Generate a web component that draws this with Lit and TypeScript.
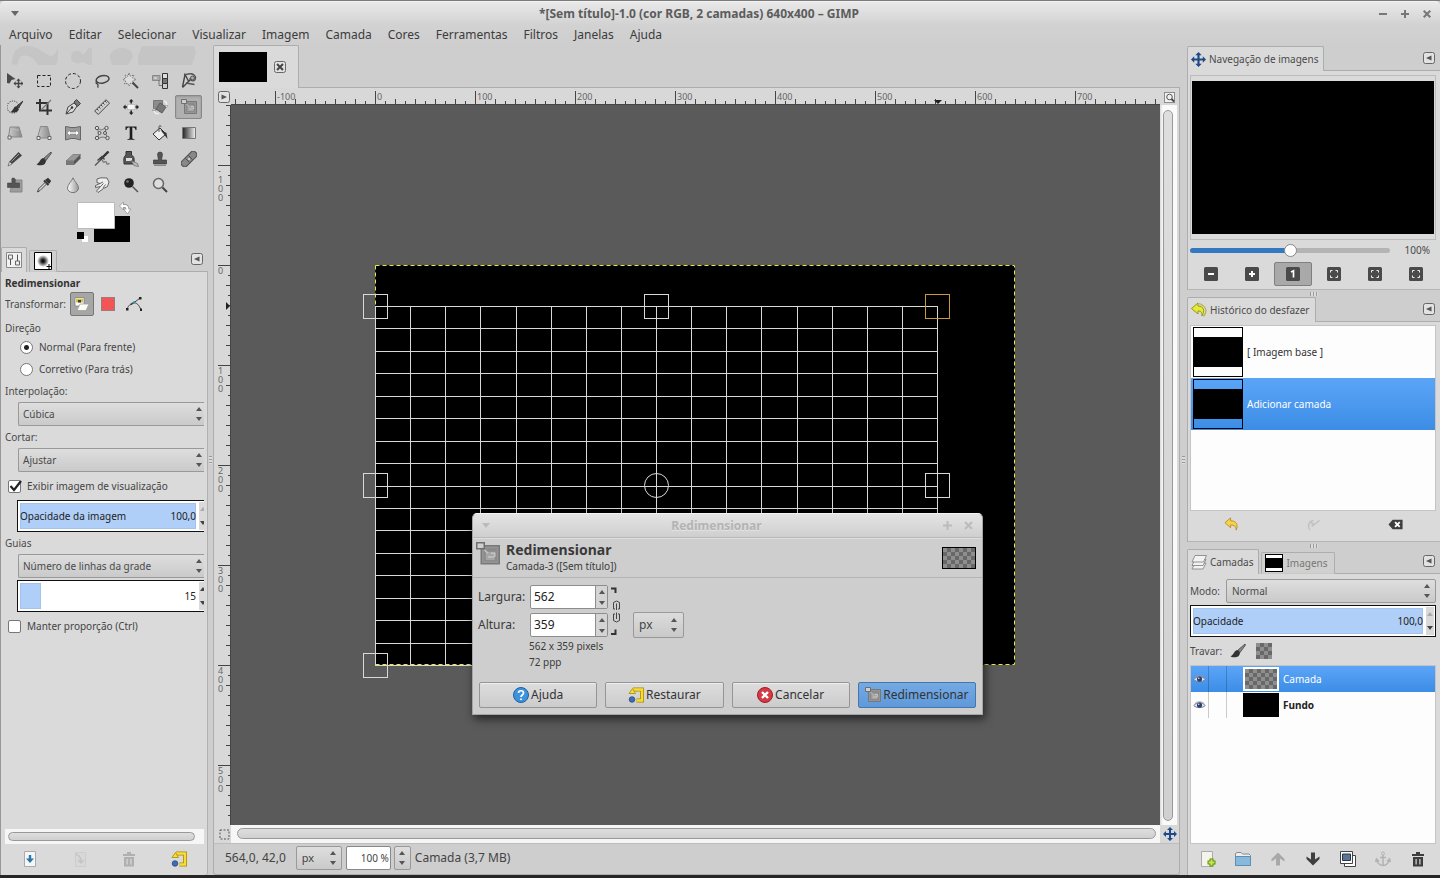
import { LitElement, html, svg, css, nothing } from "lit";
import type { TemplateResult } from "lit";
import { customElement, state } from "lit/decorators.js";
import { classMap } from "lit/directives/class-map.js";
import { styleMap } from "lit/directives/style-map.js";

type Glyph = TemplateResult;

const icon = (body: Glyph, size = 16, box = 16) =>
  html`<svg class="icon" width=${size} height=${size} viewBox="0 0 ${box} ${box}" fill="none" aria-hidden="true">${body}</svg>`;

const cross = (x: number, y: number, r: number, color: string) => svg`
  <path fill=${color} transform="translate(${x} ${y}) scale(${r / 7})"
    d="M0-7 3-4H1V-1H4V-3L7 0 4 3V1H1V4H3L0 7-3 4H-1V1H-4V3L-7 0-4-3V-1H-1V-4H-3Z"/>`;

const scaleGlyph = svg`
  <path d="M3.500 2.500H15.500V14.500H3.500Z" fill="#959595" stroke="#787878"/>
  <path d="M5 4H14V13H5Z" fill="#8b8b8b"/>
  <path d="M6.500 6.500H12.500V12H6.500Z" fill="#a5a5a5"/>
  <path d="M5.500 5 8 7.500M8 10H12M10 7.500H12.500V10" stroke="#c4c4c4"/>
  <path d="M.5.500H5.500V4.500H.5Z" fill="#cfcfcf" stroke="#6e6e6e"/>`;

const brushGlyph = svg`
  <path d="M15 1 8 7l2 2.5L15.5 2Z" fill="#888" stroke="#333" stroke-width=".7"/>
  <path d="M7.5 7C4 7.500 4.500 11 .5 13.500 5 15.500 10 14 10 9.500Z" fill="#333"/>`;

const stampGlyph = svg`
  <path d="M8 1a2.500 2.500 0 0 1 2.500 2.500L9.500 9H14.500V13H1.500V9H6.500L5.500 3.500A2.500 2.500 0 0 1 8 1Z" fill="#555" stroke="#333" stroke-width=".6"/>
  <path d="M2 14.500H14" stroke="#888"/>`;

const resetGlyph = svg`
  <path d="M5 2.500H14V13.500H8.500" stroke="#a88b00" stroke-width="4"/>
  <path d="M5 2.500H14V13.500H8.500" stroke="#f6dc3a" stroke-width="2.400"/>
  <path d="M1 6.500 4.500 1.500 7.500 6.500Z" fill="#f6dc3a" stroke="#a88b00" stroke-width=".8"/>
  <circle cx="4" cy="12.500" r="2.800" fill="#3c6fb5" stroke="#1f3d72" stroke-width=".7"/>`;

const tools: { name: string; glyph: Glyph }[] = [
  { name: "Mover", glyph: svg`<path d="M0 0 8.500 6 4.500 7 2.500 10.500 0 10Z" fill="#4a4a4a"/>${cross(11.500, 10.500, 5, "#444")}` },
  { name: "Seleção retangular", glyph: svg`<path d="M1.500 2.500H14.500V13.500H1.500Z" stroke="#222" stroke-dasharray="3 2"/>` },
  { name: "Seleção elíptica", glyph: svg`<circle cx="8" cy="8" r="7.500" stroke="#222" stroke-dasharray="3 2"/>` },
  { name: "Seleção livre", glyph: svg`<ellipse cx="8.500" cy="6.500" rx="6.500" ry="3.700" transform="rotate(-12 8 6)" stroke="#444" stroke-width="1.500"/><path d="M2.500 8.500C1 11 4 10 4 12S3 13.500 4.500 14.500" stroke="#444" stroke-width="1.300"/>` },
  { name: "Seleção contígua", glyph: svg`<path d="M6 0 7.200 3.200 11 2 9.500 5 13 6.500 9.500 8 11 11 7.500 10 6 13 4.500 10 1.500 11 2.700 8 0 6.500 3 5 2 2 5 3.200Z" fill="#ddd" stroke="#666" stroke-width=".9" stroke-dasharray="1.500 1"/><path d="M9.500 9.500 15 15" stroke="#444" stroke-width="2"/>` },
  { name: "Seleção por cor", glyph: svg`<path d="M.5 2.500H8V7.500H.5Z" fill="#aaa" stroke="#888"/><path d="M2 5H5" stroke="#eee"/><path d="M7 7V12.500H11" stroke="#777"/><path d="M10.500.500H15.500V5.500H10.500Z" fill="#ddd" stroke="#333"/><path d="M10.500 5.500H15.500V10.500H10.500Z" fill="#777" stroke="#333"/><path d="M10.500 10.500H15.500V15.500H10.500Z" fill="#ccc" stroke="#333"/>` },
  { name: "Tesoura", glyph: svg`<path d="M1.500 14 4 1.500 8 9M1.500 14.500 10 6" stroke="#444" stroke-width="1.400"/><path d="M3 2C7 1 12-1 14.500 4 15 9 9 9 9 5" stroke="#555" stroke-width="1.400"/><path d="M5 10 13.500 11.500" stroke="#555" stroke-width="1.300"/><circle cx="11.500" cy="5" r="2" fill="#aaa" stroke="#555"/>` },
  { name: "Seleção do primeiro plano", glyph: svg`<circle cx="6" cy="8" r="6" stroke="#222" stroke-dasharray="1 1.400"/><path d="M16 2 10 7 11.500 9Z" fill="#555" stroke="#333"/><path d="M9.500 7C6 8 7 11 3.500 13 8 14.500 12 13 11.500 9Z" fill="#333"/>` },
  { name: "Cortar", glyph: svg`<path d="M4 0V11.500H16M0 4H11.500V16" stroke="#333" stroke-width="2"/><path d="M5 11 15 1" stroke="#777" stroke-width="1.200"/>` },
  { name: "Vetores", glyph: svg`<path d="M1 15 3 8 9 4 12 7 8 13Z" fill="#ddd" stroke="#444"/><path d="M9 3 11.500.5 15.500 4.500 12.500 7.500Z" fill="#777" stroke="#444"/><path d="M1.500 14.500 7 8.500" stroke="#444"/><circle cx="7" cy="8.500" r="1.200" fill="#333"/>` },
  { name: "Medidas", glyph: svg`<path d="M.7 12 12 .7 15.500 4.200 4.200 15.500Z" fill="#ccc" stroke="#444"/><path d="M3 10l1.500 1.500M5 8l1.500 1.500M7 6l1.500 1.500M9 4l1.500 1.500M11 2l1.500 1.500" stroke="#444"/>` },
  { name: "Alinhar", glyph: svg`<path d="M4.500 5.500H12V10.500H4.500Z" fill="#f4f4f4" stroke="#aaa" stroke-width=".6"/><path d="M8.200 0 10.500 2.500H9V4.500H7.400V2.500H6ZM8.200 16 10.500 13.500H9V11.500H7.400V13.500H6ZM0 8 2.500 5.500V7.200H4V8.800H2.500V10.500ZM16 8 13.500 5.500V7.200H12.500V8.800H13.500V10.500Z" fill="#222"/>` },
  { name: "Rotacionar", glyph: svg`<path d="M1.500 1.500H10.500V10.500H1.500Z" fill="#8c8c8c" stroke="#777"/><path d="M8 4 14 8 10 14 4 10Z" fill="#777" stroke="#5c5c5c"/><path d="M12 2C15 3 15 5 14.500 7M2 11C2 14 4 15 7 14.500" stroke="#eee" stroke-width="1.500"/><path d="M12.500 6.500H16L14.500 8.500Z M0 11.500H4L2 9.500Z" fill="#eee" stroke="#777" stroke-width=".5"/>` },
  { name: "Redimensionar", glyph: scaleGlyph },
  { name: "Inclinar", glyph: svg`<path d="M3 2 12 2 15 12 1.500 12Z" fill="url(#toolShade)" stroke="#888"/><path d="M1 11H4V14H1Z" fill="#eee" stroke="#666"/><path d="M3 4C6 3 9 6 12 5" stroke="#bbb"/>` },
  { name: "Perspectiva", glyph: svg`<path d="M4.500 1.500H11.500L14.500 13H1.500Z" fill="url(#toolShade)" stroke="#888"/><path d="M1 11.500H4V14.500H1ZM12 11.500H15V14.500H12Z" fill="#eee" stroke="#666"/>` },
  { name: "Espelhar", glyph: svg`<path d="M.5 1.500 6 2.500H10L15.500 1.500V15L10 13.500H6L.5 15Z" fill="#999" stroke="#666"/><path d="M2 8 5 5V7H11V5L14 8 11 11V9H5V11Z" fill="#fff" stroke="#777" stroke-width=".5"/>` },
  { name: "Gaiola", glyph: svg`<path d="M3 3 7 5 12 3 11 8 14 13 8 12 3 14 5 9Z" fill="#ccc" stroke="#777"/><g fill="#ddd" stroke="#555"><circle cx="3" cy="3" r="1.700"/><circle cx="12.500" cy="3" r="1.700"/><circle cx="3" cy="13" r="1.700"/><circle cx="13.500" cy="13" r="1.700"/><circle cx="5.500" cy="8" r="1.500"/><circle cx="11" cy="8" r="1.500"/></g>` },
  { name: "Texto", glyph: svg`<path d="M2.500 1.500H13.500V5H12.500C12.200 3 11.500 2.500 9.300 2.500V12.500C9.300 13.700 9.800 14 11.500 14V14.800H4.500V14C6.200 14 6.700 13.700 6.700 12.500V2.500C4.500 2.500 3.800 3 3.500 5H2.500Z" fill="#1d1d1d"/>` },
  { name: "Preenchimento", glyph: svg`<path d="M1 9 8 3 14 9 7 15Z" fill="#eee" stroke="#333"/><path d="M7 7V2C7 0 9 0 9 2" stroke="#555"/><path d="M8 4.500 14.500 8 15.500 14 12.500 10Z" fill="#333"/>` },
  { name: "Mistura", glyph: svg`<path d="M1.500 2.500H14.500V13.500H1.500Z" fill="url(#toolBlend)" stroke="#777"/>` },
  { name: "Lápis", glyph: svg`<path d="M11.500 1 15 4.500 5 13 2.500 10.500Z" fill="#444"/><path d="M2.500 10.500 1 15 5 13Z" fill="#ddd" stroke="#444" stroke-width=".6"/><path d="M12 3 4.500 10.500" stroke="#999"/>` },
  { name: "Pincel", glyph: brushGlyph },
  { name: "Borracha", glyph: svg`<path d="M1 10 8 3.500H15.500L9 10Z" fill="#999" stroke="#666" stroke-width=".6"/><path d="M1 10H9V14H1Z" fill="#777"/><path d="M9 10 15.500 3.500V7.500L9 14Z" fill="#555"/>` },
  { name: "Aerógrafo", glyph: svg`<path d="M14.500.500 6 9" stroke="#333" stroke-width="2.400"/><path d="M7 8.500 1 14.500" stroke="#555" stroke-width="1.200"/><path d="M3.500 9.500 8 5.500 10.500 8.500" stroke="#444" stroke-width="1.300"/><path d="M8.500 9C9 14 12 8.500 12.500 11.500S14 12.500 15.500 12.500" stroke="#777" stroke-width="1.300"/>` },
  { name: "Tinta", glyph: svg`<path d="M3 .5H8.500V4C12 6 11 9 11 13H1C1 9 0 6 3 4Z" fill="#555" stroke="#333"/><path d="M3 7H9V10H3Z" fill="#ddd"/><path d="M8 9.500 14.500 12.500 15.500 15.500 11 14.500Z" fill="#bbb" stroke="#666" stroke-width=".7"/>` },
  { name: "Clonagem", glyph: stampGlyph },
  { name: "Restauração", glyph: svg`<rect x="-1.500" y="4.500" width="19" height="7" rx="3.500" transform="rotate(-45 8 8)" fill="#888" stroke="#4c4c4c"/><path d="M4.500 7.500 8.500 11.500M7.500 4.500 11.500 8.500" stroke="#4c4c4c"/><path d="M7 8H9M8 7V9" stroke="#ddd"/>` },
  { name: "Clonagem em perspectiva", glyph: svg`<path d="M6 3H15V15H3Z" fill="#9c9c9c" stroke="#888"/><path d="M6 1C9 1 8.500 3.500 8 6H12.500V10.500H.5V6H5C5 3.500 4 1 6 1Z" fill="#555" stroke="#444" stroke-width=".6"/>` },
  { name: "Seletor de cores", glyph: svg`<path d="M9 3 12 .8 15.200 4 13 7Z" fill="#333"/><path d="M8 3.500 12.500 8" stroke="#333" stroke-width="2"/><path d="M9 5.500 10.500 7 4 13.500 1.500 15 2.500 12Z" fill="#ddd" stroke="#444"/>` },
  { name: "Desfocar", glyph: svg`<path d="M8 .8C9 4 13.500 7.500 13.500 11A5.500 4.600 0 0 1 2.500 11C2.500 7.500 7 4 8 .8Z" fill="url(#toolDrop)" stroke="#777"/>` },
  { name: "Borrar", glyph: svg`<path d="M3 2 7 .8 13 1 15 5 13.500 9.500 9.500 11.500 4 15.500 2.500 14 6.500 9.500 1.500 10.500 1.500 8.500 6 6.500 3 5.500Z" fill="#eee" stroke="#555" stroke-width=".9"/><path d="M6.500 9.500 9.500 6.500M9 11 11.500 7.500M6 6.500 9 5" stroke="#666"/>` },
  { name: "Subexposição", glyph: svg`<circle cx="6" cy="6" r="4.800" fill="#222"/><circle cx="4.500" cy="4.500" r="1.300" fill="#777"/><path d="M9.500 9.500 15 15" stroke="#555" stroke-width="1.500"/>` },
  { name: "Zoom", glyph: svg`<circle cx="6.500" cy="6.500" r="5" fill="#ddd" stroke="#666" stroke-width="1.500"/><path d="M10.500 10.500 15 15" stroke="#444" stroke-width="2"/>` },
];

const SELECTED_TOOL = "Redimensionar";

const menus = ["Arquivo", "Editar", "Selecionar", "Visualizar", "Imagem", "Camada", "Cores", "Ferramentas", "Filtros", "Janelas", "Ajuda"];

const darkTile = (body: Glyph) => svg`<rect x="1" y="1" width="14" height="14" rx="1.500" fill="#4a4a4a"/>${body}`;
const fitMarks = svg`<path d="M4.500 6.500V4.500H6.500M9.500 4.500H11.500V6.500M11.500 9.500V11.500H9.500M6.500 11.500H4.500V9.500" stroke="#eee"/>`;

const viewButtons: { name: string; glyph: Glyph; on?: boolean }[] = [
  { name: "Afastar", glyph: darkTile(svg`<path d="M5 8H11" stroke="#fff" stroke-width="2"/>`) },
  { name: "Aproximar", glyph: darkTile(svg`<path d="M5 8H11M8 5V11" stroke="#fff" stroke-width="2"/>`) },
  { name: "Zoom 1:1", glyph: darkTile(svg`<path d="M6 6 8.500 4.800V11.500" stroke="#fff" stroke-width="1.700"/>`), on: true },
  { name: "Ajustar imagem na janela", glyph: darkTile(fitMarks) },
  { name: "Preencher janela", glyph: darkTile(fitMarks) },
  { name: "Encolher janela", glyph: darkTile(fitMarks) },
];

const undoGlyph = (fill: string, edge: string) => svg`<path d="M1 6 7 1V4C13 4 15.500 8 13 14 13 10 11 8.500 7 8.500V11.500Z" fill=${fill} stroke=${edge} stroke-width=".9"/>`;

const trashGlyph = (color: string) => svg`<path d="M2 3H14V5H2ZM6 1H10V3H6ZM3 6H13V15.500H3ZM5.500 8V13.500H6.700V8ZM9.300 8V13.500H10.500V8Z" fill=${color} fill-rule="evenodd"/>`;

const undoButtons = [
  { name: "Desfazer", glyph: undoGlyph("#f7d24b", "#b98a1a") },
  { name: "Refazer", glyph: svg`<path d="M4 14C1 8 4 4 8 4M6 10 14.500 3.500M5 6 9 8" stroke="#c0c0c0" stroke-width="1.500"/>` },
  { name: "Limpar histórico", glyph: svg`<path d="M.5 8 5 3H15.500V13H5Z" fill="#3d3d3d"/><path d="M7.500 5.500 12.500 10.500M12.500 5.500 7.500 10.500" stroke="#fff" stroke-width="2"/>` },
];

const layerButtons = [
  { name: "Nova camada", glyph: svg`<path d="M1.500.500H12.500V15.500H1.500Z" fill="#f4f4ec" stroke="#aaa"/><path d="M7.500 11.500H15.500M11.500 7.500V15.500" stroke="#5f8f00" stroke-width="4"/><path d="M8.500 11.500H14.500M11.500 8.500V14.500" stroke="#c6e85a" stroke-width="2"/>` },
  { name: "Novo grupo", glyph: svg`<path d="M.5 14.500V2.500L2 1.500H6L7.500 3H14L15.500 4.500V14.500Z" fill="#eee" stroke="#888"/><path d="M.5 5.500H15.500V14.500H.5Z" fill="#86b9dc" stroke="#5d8fb5"/>` },
  { name: "Levantar camada", glyph: svg`<path d="M8 1.500 14.500 8V10.500L10 7.500V14.500H6V7.500L1.500 10.500V8Z" fill="#a8a8a8"/>` },
  { name: "Abaixar camada", glyph: svg`<path d="M8 14.500 14.500 8V5.500L10 8.500V1.500H6V8.500L1.500 5.500V8Z" fill="#3f3f3f"/>` },
  { name: "Duplicar camada", glyph: svg`<path d="M4.500 4.500H15.500V15.500H4.500Z" fill="#fff" stroke="#444"/><path d="M.5.500H12.500V12.500H.5Z" fill="#fff" stroke="#444"/><path d="M2.500 3H10.500V9.500H2.500Z" fill="#5c7590" stroke="#26384f"/>` },
  { name: "Ancorar camada", glyph: svg`<path d="M8 4V14M5 6.500H11M1.500 8.500C2 12 5 14.500 8 14.500S14 12 14.500 8.500M.5 11 1.500 8 4 10.500M12 10.500 14.500 8 15.500 11" stroke="#b2b2b2" stroke-width="1.500"/><circle cx="8" cy="2.500" r="1.500" stroke="#b2b2b2"/>` },
  { name: "Apagar camada", glyph: trashGlyph("#3d3d3d") },
];

const optionButtons = [
  { name: "Salvar opções", glyph: svg`<path d="M2.500.500H13.500V15.500H2.500Z" fill="#f6f6f6" stroke="#aaa"/><path d="M6.800 4H9.200V7.500H12L8 12 4 7.500H6.800Z" fill="#2b77a8"/>` },
  { name: "Restaurar opções", glyph: svg`<path d="M3.500 1.500H13.500V15.500H3.500Z" fill="#d8d8d8" stroke="#cdcdcd"/><path d="M3 3C8 4 9 7 9 11M6 9 9 12 12 9" stroke="#c4c4c4" stroke-width="1.400"/>` },
  { name: "Apagar opções", glyph: trashGlyph("#b0b0b0") },
  { name: "Reiniciar opções", glyph: resetGlyph },
];

const eyeGlyph = svg`
  <path d="M1 8C4 3.500 12 3.500 15 8 12 11.500 4 11.500 1 8Z" fill="#e8ecf2" stroke="#77778a" stroke-width="1.200"/>
  <path d="M2 6C5 2.500 11 2.500 14 6" stroke="#999"/>
  <circle cx="8" cy="7.500" r="3.200" fill="#2b3f74"/><circle cx="7" cy="6.500" r="1" fill="#dfe8ff"/>`;

const chain = svg`
  <path d="M1 1.500H5.500V6" stroke="#333" stroke-width="2"/>
  <path d="M1 47H5.500V42.500" stroke="#333" stroke-width="2"/>
  <path d="M5 22H3.500V15.500Q6.500 12.500 9.500 15.500V22H8M6.500 16.500V23" stroke="#444"/>
  <path d="M5 27H3.500V33.500Q6.500 36.500 9.500 33.500V27H8M6.500 25.500V32" stroke="#444"/>`;

const menuArrow = (label: string, flip = false) => html`
  <button class="corner" aria-label=${label}>
    <svg class="icon" width="12" height="12" viewBox="0 0 12 12" fill="none" aria-hidden="true">
      <rect x=".5" y=".5" width="11" height="11" rx="2" fill="#e2e2e2" stroke="#666"/>
      <path d=${flip ? "M3.500 3.500 9 6 3.500 8.500Z" : "M8.500 3.500 3 6 8.500 8.500Z"} fill="#555"/>
    </svg>
  </button>`;

const arrows = html`
  <svg class="arrows" width="6" height="14" viewBox="0 0 6 14" aria-hidden="true">
    <path d="M0 4 3 0 6 4ZM0 10H6L3 14Z" fill="#555"/>
  </svg>`;

const combo = (id: string, value: string, label: string | null, cls = "") => html`
  <div class="combo ${cls}">
    <select id=${id} aria-label=${label ?? nothing}><option>${value}</option></select>
    ${arrows}
  </div>`;

const steppers = (name: string, topped = false) => html`
  <div class="steps">
    <button class=${classMap({ step: true, dim: topped })} aria-label="Aumentar ${name}">
      <svg width="6" height="4" viewBox="0 0 6 4" aria-hidden="true"><path d="M0 4 3 0 6 4Z" fill="currentColor"/></svg>
    </button>
    <button class="step" aria-label="Diminuir ${name}">
      <svg width="6" height="4" viewBox="0 0 6 4" aria-hidden="true"><path d="M0 0H6L3 4Z" fill="currentColor"/></svg>
    </button>
  </div>`;

const scaleField = (id: string, label: string, value: string, fill: number, hideLabel = false) => html`
  <div class="scale">
    <div class="bar">
      <div class="fill" style=${styleMap({ width: `${fill}%` })}></div>
      <div class="bartext">
        ${hideLabel ? html`<span></span>` : html`<label for=${id}>${label}</label>`}
        <input id=${id} class="barvalue" aria-label=${hideLabel ? label : nothing} .value=${value} />
      </div>
    </div>
    ${steppers(label, fill === 100)}
  </div>`;

const checker = (id: string, w: number, h: number, size: number) => html`
  <svg class="icon" width=${w} height=${h} aria-hidden="true">
    <defs><pattern id=${id} width=${size * 2} height=${size * 2} patternUnits="userSpaceOnUse">
      <rect width=${size * 2} height=${size * 2} fill="#686868"/>
      <path d="M0 0H${size}V${size}H0ZM${size} ${size}H${size * 2}V${size * 2}H${size}Z" fill="#8e8e8e"/>
    </pattern></defs>
    <rect width=${w} height=${h} fill="url(#${id})"/>
  </svg>`;

const range = (from: number, to: number, step: number) =>
  Array.from({ length: Math.floor((to - from) / step) + 1 }, (_, i) => from + i * step);

const tickLength = (v: number) => (v % 100 === 0 ? 13 : v % 20 === 0 ? 5 : 3);

const ORIGIN = { x: 144, y: 160 };
const BOX = { x: 144, y: 201, w: 562, h: 359 };
/* Space that the docks, bars and borders take from the window around the canvas. */
const AROUND = { x: 511, y: 158 };

@customElement("resize-dialog")
export class ResizeDialog extends LitElement {
  static styles = css`
    :host {
      display: flex;
      flex-direction: column;
      width: 511px;
      box-sizing: border-box;
      border: 1px solid #a5a5a5;
      border-top-color: #f4f4f4;
      border-radius: 5px 5px 0 0;
      background: #cecece;
      box-shadow: 2px 4px 10px rgba(0, 0, 0, .6);
      color: #3a3a3a;
      font: 12px/16px "Noto Sans", sans-serif;
    }
    .icon { display: block; flex: none; }
    .titlebar { display: flex; align-items: center; height: 23px; padding: 0 9px; gap: 12px; color: #b3b3b3; background: linear-gradient(#e4e4e4, #cfcfcf); border-radius: 5px 5px 0 0; border-bottom: 1px solid #b9b9b9; }
    .titlebar h2 { flex: 1; margin: 0; text-align: center; font-size: 12px; line-height: 16px; text-shadow: 0 1px #e6e6e6; }
    .chrome { display: flex; padding: 0; border: 0; background: none; }
    .head { display: flex; align-items: center; gap: 6px; height: 38px; padding: 0 6px 0 3px; border-top: 1px solid #dedede; border-bottom: 1px solid #b4b4b4; }
    .head > .icon { align-self: flex-start; margin-top: 3px; }
    .names { flex: 1; }
    .names b { display: block; font-size: 13px; line-height: 16px; }
    .names b { font-size: 14px; }
    .names span { display: block; font-size: 10px; line-height: 16px; }
    .thumb { border: 1px solid #000; }
    .form { display: grid; grid-template-columns: 50px 78px 14px 60px; grid-template-rows: 24px 24px; column-gap: 2px; row-gap: 4px; padding: 7px 6px 0 5px; align-items: center; }
    .form > label, .spin { grid-row: 1; }
    .form > label { grid-column: 1; }
    .spin { grid-column: 2; display: flex; height: 24px; box-sizing: border-box; border: 1px solid #8d8d8d; border-radius: 2px; background: #fff; }
    .form > .second { grid-row: 2; }
    .spin input { flex: 1; min-width: 0; border: 0; padding: 0 3px; background: none; font: inherit; color: #222; outline: none; }
    .steps { display: flex; flex-direction: column; width: 11px; background: #d4d4d4; border-left: 1px solid #8d8d8d; }
    .step { flex: 1; display: flex; align-items: center; justify-content: center; border: 0; padding: 0; background: none; color: #555; }
    .link { grid-column: 3; grid-row: 1 / 3; display: flex; border: 0; background: none; padding: 0; }
    .combo { grid-column: 4; grid-row: 2; display: grid; align-items: center; margin-left: 7px; width: 51px; }
    .combo select { grid-area: 1 / 1; appearance: none; height: 26px; border: 1px solid #999; border-radius: 2px; padding: 0 5px; background: linear-gradient(#dcdcdc, #c9c9c9); font: inherit; color: #444; }
    .arrows { grid-area: 1 / 1; justify-self: end; margin-right: 7px; pointer-events: none; }
    .info { padding: 1px 0 0 56px; font-size: 10px; line-height: 16px; }
    .actions { display: grid; grid-template-columns: repeat(4, 1fr); gap: 8px; padding: 12px 6px 6px; }
    .action { display: flex; align-items: center; justify-content: center; gap: 2px; height: 26px; padding: 0; border: 1px solid #959595; border-radius: 2px; background: linear-gradient(#dddddd, #cccccc); box-shadow: inset 0 1px #eee; color: #333; font: inherit; }
    .action.primary { background: linear-gradient(#74aae4, #5f99da); border-color: #4677ab; box-shadow: none; }
  `;

  render() {
    return html`
      <div class="titlebar">
        <button class="chrome" aria-label="Recolher"><svg width="8" height="5"><path d="M0 0H8L4 5Z" fill="#bbb"/></svg></button>
        <h2>Redimensionar</h2>
        <button class="chrome" aria-label="Maximizar"><svg width="9" height="9"><path d="M4.500 0V9M0 4.500H9" stroke="#bbb" stroke-width="2"/></svg></button>
        <button class="chrome" aria-label="Fechar"><svg width="9" height="9"><path d="M1 1 8 8M8 1 1 8" stroke="#bbb" stroke-width="2"/></svg></button>
      </div>
      <div class="head">
        ${icon(scaleGlyph, 24)}
        <div class="names"><b>Redimensionar</b><span>Camada-3 ([Sem título])</span></div>
        <div class="thumb">${checker("dialogThumb", 32, 20, 4)}</div>
      </div>
      <div class="form">
        <label for="w">Largura:</label>
        <div class="spin"><input id="w" .value=${"562"} />${steppers("largura")}</div>
        <label class="second" for="h">Altura:</label>
        <div class="spin second"><input id="h" .value=${"359"} />${steppers("altura")}</div>
        <button class="link" aria-label="Manter proporção"><svg width="12" height="49" fill="none">${chain}</svg></button>
        ${combo("unit", "px", "Unidade")}
      </div>
      <div class="info">562 x 359 pixels<br />72 ppp</div>
      <div class="actions">
        <button class="action">${icon(svg`<circle cx="8" cy="8" r="7.500" fill="#3c93dd" stroke="#1f5f9f"/><path d="M5.500 6C5.500 3 10.500 3 10.500 6 10.500 8 8 8 8 10M8 11.500V13" stroke="#fff" stroke-width="1.700"/>`)}Ajuda</button>
        <button class="action">${icon(resetGlyph)}Restaurar</button>
        <button class="action">${icon(svg`<circle cx="8" cy="8" r="7.500" fill="#d33a44" stroke="#9c1d28"/><path d="M5 5 11 11M11 5 5 11" stroke="#fff" stroke-width="2.400"/>`)}Cancelar</button>
        <button class="action primary">${icon(scaleGlyph)}Redimensionar</button>
      </div>`;
  }
}

@customElement("app-root")
export class AppRoot extends LitElement {
  @state() private tool = SELECTED_TOOL;
  @state() private room = { x: 0, y: 0 };

  private measure = () => {
    this.room = { x: window.innerWidth - AROUND.x, y: window.innerHeight - AROUND.y };
  };

  connectedCallback() {
    super.connectedCallback();
    this.measure();
    window.addEventListener("resize", this.measure);
  }

  disconnectedCallback() {
    window.removeEventListener("resize", this.measure);
    super.disconnectedCallback();
  }

  static styles = css`
    :host {
      display: flex;
      flex-direction: column;
      height: 100vh;
      box-sizing: border-box;
      border-top: 1px solid #7b7b7b;
      border-bottom: 3px solid #262626;
      background: #cecece;
      color: #4a4a4a;
      font: 10px/16px "Noto Sans", sans-serif;
      overflow: hidden;
    }
    * { box-sizing: border-box; }
    button { display: flex; align-items: center; justify-content: center; padding: 0; border: 1px solid transparent; background: none; color: inherit; font: inherit; }
    input, select { font: inherit; color: inherit; }
    h1, h2, ul { margin: 0; padding: 0; font-size: inherit; list-style: none; }
    .icon { display: block; flex: none; }

    .titlebar { display: flex; align-items: center; gap: 12px; height: 24px; flex: none; padding: 0 8px 0 10px; background: linear-gradient(#e9e9e9, #d2d2d2); border-top: 1px solid #f3f3f3; border-radius: 5px 5px 0 0; }
    .titlebar h1 { flex: 1; text-align: center; font-size: 12px; line-height: 16px; color: #5c5c5c; }
    .menubar { display: flex; gap: 16px; height: 20px; flex: none; padding: 0 9px; background: linear-gradient(#d2d2d2, #cecece); }
    .menubar button { border: 0; font-size: 12px; line-height: 18px; color: #3c3c3c; }
    .work { flex: 1; min-height: 0; display: grid; grid-template-columns: 208px 5px 1fr 7px 253px; }

    .left { display: flex; flex-direction: column; min-height: 0; box-shadow: inset 1px 0 #979797; }
    .mascot { display: block; height: 23px; }
    .tools { display: grid; grid-template-columns: repeat(7, 29px); grid-auto-rows: 26px; }
    .tool { margin: 1px; border-radius: 2px; }
    .tool.on { background: #b0b0b0; border-color: #888; box-shadow: inset 0 1px 2px #999; }
    .colors { display: flex; justify-content: center; height: 49px; padding: 4px 0 0; }
    .tabs { display: flex; align-items: flex-end; flex: none; height: 25px; }
    .tabs .rest { flex: 1; align-self: stretch; display: flex; justify-content: flex-end; align-items: center; padding-right: 4px; border-bottom: 1px solid #adadad; }
    .tab { display: flex; align-items: center; gap: 3px; height: 25px; padding: 0 5px 0 3px; border: 1px solid #adadad; border-bottom-color: #c9c9c9; border-radius: 2px 2px 0 0; background: #d0d0d0; color: #777; }
    .tab.on { background: #dadada; border-bottom: 0; color: #4a4a4a; }
    .tab.late { height: 22px; margin-left: 2px; padding-right: 6px; }
    .left .tabs { padding-left: 1px; }
    .left .tabs .tab { padding: 0 4px; }
    .options { flex: 1; min-height: 0; display: flex; flex-direction: column; padding-left: 4px; background: #dadada; border: solid #979797; border-width: 0 0 0 1px; box-shadow: inset -1px 0 #b0b0b0; border-radius: 0 0 3px 0; }
    .form { flex: 1; display: flex; flex-direction: column; overflow: hidden; margin-right: 4px; }
    .optitle { height: 20px; padding-top: 3px; font-weight: bold; color: #333; }
    .mode { display: flex; align-items: center; height: 24px; gap: 2px; }
    .mode span { margin-right: 2px; }
    .mode button { width: 24px; height: 24px; border-radius: 2px; }
    .mode button.on { background: #a6a6a6; border-color: #777; }
    .sub { height: 22px; line-height: 22px; }
    .sub.first { height: 20px; line-height: 24px; }
    .tick { display: flex; align-items: center; gap: 6px; height: 22px; color: #444; }
    .tick.deep { padding-left: 15px; }
    .tick.tall { height: 28px; padding-left: 3px; }
    .tick input { appearance: none; width: 13px; height: 13px; margin: 0; border: 1px solid #777; background: #fff; border-radius: 2px; }
    .tick input[type="radio"] { border-radius: 50%; }
    .tick input[type="radio"]:checked { background: radial-gradient(circle, #222 0 2px, #fff 3px); }
    .checkbox { display: grid; }
    .checkbox > * { grid-area: 1 / 1; }
    .checkbox svg { overflow: visible; pointer-events: none; display: none; }
    .checkbox input:checked + svg { display: block; }

    .combo { display: grid; align-items: center; }
    .combo select { grid-area: 1 / 1; appearance: none; width: 100%; height: 24px; padding: 0 5px; border: 1px solid #999; border-radius: 2px; background: linear-gradient(#dedede, #cacaca); }
    .combo .arrows { grid-area: 1 / 1; justify-self: end; margin-right: 6px; pointer-events: none; }
    .combo.cut { padding-left: 13px; }
    .combo.cut select { border-right: 0; border-radius: 2px 0 0 2px; padding: 0 4px; }
    .combo.cut .arrows { margin-right: 2px; }
    .cutbox { margin: 0 -5px 0 12px; }
    .cutbox.below { margin-top: 2px; }
    .scale { display: flex; height: 32px; border: 1px solid #111; background: #fff; color: #222; }
    .bar { display: grid; flex: 1; margin: 2px; }
    .bar > * { grid-area: 1 / 1; }
    .fill { background: #b0cff8; border: 1px solid #a3c2ec; }
    .bartext { display: flex; align-items: center; justify-content: space-between; }
    .bartext label { white-space: nowrap; }
    .barvalue { width: 40px; padding: 0; border: 0; background: none; text-align: right; outline: none; }
    .steps { display: flex; flex-direction: column; width: 8px; margin: 1px; background: #dadada; color: #444; }
    .step { flex: 1; border: 0; }
    .step.dim { color: #aaa; }

    .pill { border: 1px solid #999; border-radius: 6px; background: linear-gradient(#dedede, #d0d0d0); }
    .optscroll { padding: 3px; margin: 0 4px 0 0; background: #f6f6f6; }
    .optscroll .pill { height: 9px; margin: 0 6px 0 0; }
    .strip { display: grid; grid-auto-flow: column; grid-auto-columns: 1fr; align-items: center; height: 31px; padding-bottom: 1px; flex: none; }
    .strip.opts { margin-right: 4px; }
    .strip.undos { height: 30px; padding-bottom: 3px; }

    .gutter { display: flex; flex-direction: column; align-items: center; justify-content: center; }
    .gripv { width: 3px; height: 8px; background: repeating-linear-gradient(#999 0 1px, #ddd 1px 3px); }
    .griph { display: flex; align-items: center; justify-content: center; height: 7px; flex: none; }
    .griph i { width: 8px; height: 4px; background: repeating-linear-gradient(90deg, #999 0 1px, #ddd 1px 3px); }

    .center { display: flex; flex-direction: column; min-width: 0; min-height: 0; }
    .doctabs { display: flex; height: 43px; flex: none; }
    .doctab { display: flex; align-items: center; gap: 6px; width: 86px; padding: 0 5px; background: #dadada; border: 1px solid #adadad; border-bottom: 0; border-radius: 2px 2px 0 0; }
    .docthumb { width: 48px; height: 30px; background: #000; }
    .doctabs .rest { flex: 1; border-bottom: 1px solid #adadad; }
    .view { flex: 1; min-height: 0; display: grid; grid-template-columns: 14px 1fr 19px; grid-template-rows: 16px 1fr 18px; padding: 1px 0 0 3px; border: solid #adadad; border-width: 0 1px; background: #d8d8d8; }
    .view > svg { display: block; width: 100%; height: 100%; }
    .rulertext { font: 9px/9px "Noto Sans", sans-serif; fill: #666; }
    .canvas { position: relative; background: #5a5a5a; overflow: hidden; }
    .canvas > svg { display: block; width: 100%; height: 100%; }
    resize-dialog { position: absolute; left: 241px; top: 408px; }
    .fixed { display: flex; align-items: center; justify-content: center; }
    .vtrack { display: flex; padding: 5px 4px 4px 3px; margin-right: 2px; background: linear-gradient(90deg, #dadada, #fafafa 3px); }
    .vtrack .pill { flex: 1; }
    .htrack { display: flex; padding: 3px 4px 4px 6px; background: #f6f6f6; }
    .htrack .pill { flex: 1; }
    .status { display: flex; align-items: center; height: 32px; flex: none; padding: 0 11px 2px; border: 1px solid #adadad; border-top-color: #bdbdbd; border-radius: 0 0 3px 3px; font-size: 12px; color: #444; }
    .status .combo { width: 46px; margin: 0 4px 0 10px; }
    .status .combo select { font-size: 11px; }
    .status .zoom { width: 45px; height: 24px; padding: 0 1px; border: 1px solid #888; border-radius: 2px; background: #fff; font-size: 10px; text-align: right; outline: none; }
    .pop { width: 17px; height: 24px; margin: 0 4px 0 3px; border: 1px solid #999; border-radius: 2px; background: linear-gradient(#dedede, #cacaca); }

    .right { display: flex; flex-direction: column; min-height: 0; padding-top: 1px; }
    .panel { display: flex; flex-direction: column; padding: 0 4px 0 2px; background: #dadada; border-left: 1px solid #adadad; border-bottom: 1px solid #b5b5b5; }
    .panel.grow { flex: 1; min-height: 0; border-bottom: 0; }
    .frame { margin: 4px 0 0; padding: 5px 1px; border: 1px solid #bbb; }
    .preview { height: 153px; background: #000; }
    .zoomrow { display: grid; grid-template-columns: 200px 1fr; align-items: center; height: 22px; padding-bottom: 2px; }
    .zoomrow output { text-align: right; padding-right: 6px; }
    .zoomrow input { appearance: none; width: 100%; height: 14px; margin: 0; background: none; }
    .zoomrow input::-webkit-slider-runnable-track { height: 5px; border-radius: 3px; background: linear-gradient(90deg, #3378c0 50%, #b4b4b4 50%); }
    .zoomrow input::-webkit-slider-thumb { appearance: none; width: 13px; height: 13px; margin-top: -4px; border: 1px solid #888; border-radius: 50%; background: #fff; }
    .views { height: 27px; padding: 0 0 3px; }
    .views button { width: 38px; height: 24px; margin: 0 auto; border-radius: 2px; }
    .views button.on { background: #a9a9a9; border-color: #808080; }
    .list { margin-top: 3px; background: #fdfdfd; border: 1px solid #c4c4c4; }
    .list.undo { height: 186px; }
    .list.layers { flex: 1; margin: 0; min-height: 0; }
    .undoitem { display: flex; align-items: center; gap: 4px; height: 52px; padding-left: 2px; color: #333; }
    .on.undoitem, .on.layer { background: linear-gradient(#5ba5f8, #3c8de6); color: #fff; }
    .undothumb { width: 50px; height: 50px; padding: 9px 0; border: 1px solid #000; }
    .undothumb::before { content: ""; display: block; height: 100%; background: #000; }
    .tinythumb { width: 18px; height: 18px; padding: 3px 0; border: 1px solid #000; background: #fff; }
    .tinythumb::before { content: ""; display: block; height: 100%; background: #000; }
    .moderow { display: flex; align-items: center; gap: 6px; margin: 5px 0 2px; }
    .moderow .combo { flex: 1; }
    .lockrow { display: flex; align-items: center; gap: 7px; height: 28px; }
    .lockrow button { width: 18px; border: 0; margin-right: 1px; }
    .layer { display: grid; grid-template-columns: 18px 18px 16px 36px 1fr; align-items: center; height: 26px; }
    .layer button { align-self: stretch; border: 0; border-right: 1px solid rgba(0, 0, 0, .2); }
    .layer b, .layer span { padding-left: 4px; }
    .layer b { color: #222; }
    .lthumb { width: 36px; height: 24px; background: #000; }
    .lthumb.active { border: 2px solid #fff; background: none; }
  `;

  private hRuler() {
    const last = this.room.x - ORIGIN.x;
    return svg`<svg aria-hidden="true">
      ${range(-140, last, 10).map((v) => {
        const x = ORIGIN.x + v;
        return svg`<path d="M${x + 0.5} ${15 - tickLength(v)}V15" stroke="#444"/>
          ${v % 100 === 0 && v + 20 < last ? svg`<text class="rulertext" x=${x + 2} y="11">${v}</text>` : nothing}`;
      })}
      <path d="M0 15.500H3000" stroke="#444"/>
      <path d="M703 11H711L707 15Z" fill="#222"/>
    </svg>`;
  }

  private vRuler() {
    const last = this.room.y - ORIGIN.y;
    return svg`<svg aria-hidden="true">
      ${range(-160, last, 10).map((v) => {
        const y = ORIGIN.y + v;
        return svg`<path d="M${14 - tickLength(v)} ${y + 0.5}H14" stroke="#444"/>
          ${v % 100 === 0 && v + 30 < last
            ? svg`<text class="rulertext" y=${y}>${[...String(v)].map((c) => svg`<tspan x="1" dy="9">${c}</tspan>`)}</text>`
            : nothing}`;
      })}
      <path d="M13.500 0V3000" stroke="#444"/>
      <path d="M9 197V205L13 201Z" fill="#222"/>
    </svg>`;
  }

  private drawing() {
    const line = (n: number, total: number) => Math.round((n * total) / 16);
    const handle = (x: number, y: number, color = "#d8d8d8") =>
      svg`<rect x=${Math.floor(x) - 11.5} y=${y - 11.5} width="24" height="24" stroke=${color}/>`;
    const midX = BOX.x + BOX.w / 2;
    const midY = BOX.y + 179;
    const endX = BOX.x + BOX.w;
    const endY = BOX.y + BOX.h;
    const n = range(0, 16, 1);
    return svg`<svg fill="none" role="img" aria-label="Imagem 640x400">
      <rect x="144" y="160" width="640" height="400" fill="#000"/>
      <rect x="144.500" y="160.500" width="639" height="399" stroke="#111"/>
      <rect x="144.500" y="160.500" width="639" height="399" stroke="#e6ea3c" stroke-dasharray="4 3"/>
      <g stroke="#d8d8d8">
        ${n.map((i) => svg`<path d="M${BOX.x + line(i, BOX.w) + 0.5} ${BOX.y}V${endY}"/>`)}
        ${n.map((i) => svg`<path d="M${BOX.x} ${BOX.y + line(i, BOX.h) + 0.5}H${endX}"/>`)}
        <circle cx=${midX + 0.5} cy=${midY + 0.5} r="12"/>
      </g>
      ${handle(BOX.x, BOX.y)}${handle(midX, BOX.y)}${handle(endX, BOX.y, "#c89a3c")}
      ${handle(BOX.x, midY)}${handle(endX, midY)}
      ${handle(BOX.x, endY)}${handle(midX, endY)}${handle(endX, endY)}
    </svg>`;
  }

  private toolbox() {
    return html`
      <svg class="mascot" width="207" height="23" fill="#c5c5c5" aria-hidden="true">
        <path d="M12 19C12 6 18 1 27 1 36 1 42 6 48 10 53 13 56 8 58 3V14L56 20H38C34 12 26 8 20 12L17 20Z"/>
        <path d="M71 13C71 4 80 4 83 10L89 3H92V20H88L83 17C78 20 72 18 71 13Z"/>
        <path d="M110 14C108 1 132-2 133 12L128 20H112Z"/>
        <path d="M138 20V11L142 1H194L196 8 192 20Z"/>
      </svg>
      <div class="tools">
        ${tools.map(
          (t) => html`<button class=${classMap({ tool: true, on: t.name === this.tool })} aria-label=${t.name} @click=${() => (this.tool = t.name)}>
            ${icon(svg`<defs>
              <linearGradient id="toolShade"><stop stop-color="#ccc"/><stop offset="1" stop-color="#888"/></linearGradient>
              <linearGradient id="toolBlend"><stop stop-color="#222"/><stop offset="1" stop-color="#f2f2f2"/></linearGradient>
              <linearGradient id="toolDrop"><stop stop-color="#fff"/><stop offset="1" stop-color="#999"/></linearGradient>
            </defs>${t.glyph}`)}
          </button>`
        )}
      </div>
      <div class="colors">
        <svg width="54" height="44" fill="none" role="img" aria-label="Cores de frente e de fundo">
          <path d="M17 14H53V40H17Z" fill="#000"/>
          <path d="M.5.500H37.500V26.500H.5Z" fill="#fff" stroke="#bbb"/>
          <path d="M4.500 33.500H11.500V40.500H4.500Z" fill="#fff" stroke="#bbb" stroke-width=".6"/><path d="M0 30H7V37H0Z" fill="#000"/>
          <path d="M45 4H48Q50.500 4 50.500 8" stroke="#888" stroke-width="3.500"/><path d="M42.500 4 46.500 0V8ZM46.500 7H54L50.500 12Z" fill="#fff" stroke="#888" stroke-width=".7"/><path d="M45 4H48Q50.500 4 50.500 8" stroke="#fff" stroke-width="2.200"/>
        </svg>
      </div>`;
  }

  private options() {
    return html`
      <div class="tabs">
        <button class="tab on" aria-label="Opções de ferramentas">${icon(svg`
          <path d="M.5.500H15.500V15.500H.5Z" fill="#f2f2f2" stroke="#888"/>
          <path d="M4.500 6.500V13M11.500 2.500V9" stroke="#555"/><path d="M2.500 3H6.500V7H2.500ZM9.500 9H13.500V13H9.500Z" fill="#eee" stroke="#666"/>`)}</button>
        <button class="tab late" aria-label="Pincéis">${icon(svg`
          <defs><radialGradient id="soft"><stop offset=".2" stop-color="#111"/><stop offset="1" stop-color="#fff"/></radialGradient></defs>
          <path d="M.5.500H17.500V17.500H.5Z" fill="#fff" stroke="#000"/><circle cx="9" cy="9" r="6" fill="url(#soft)"/><path d="M12.500 14.500H17.500M15 12V17" stroke="#000"/>`, 18, 18)}</button>
        <div class="rest">${menuArrow("Configurar esta aba")}</div>
      </div>
      <div class="options">
        <div class="form">
          <div class="optitle">Redimensionar</div>
          <div class="mode">
            <span>Transformar:</span>
            <button class="on" aria-label="Camada">${icon(svg`<path d="M1 1.500H10V10H1Z" fill="#fff" stroke="#777" stroke-width=".7"/><path d="M2 2.500H9V6.500H2Z" fill="#d6c348"/><path d="M4 4H7V6.500H4Z" fill="#44403a"/><path d="M6 8H15L12 14.500H3Z" fill="#fbfbf2" stroke="#999" stroke-width=".7"/>`)}</button>
            <button aria-label="Seleção">${icon(svg`<path d="M1.500 1.500H14.500V14.500H1.500Z" fill="#f25555" stroke="#d8d8d8"/><path d="M1.500 1.500H14.500V14.500H1.500Z" stroke="#5a2020" stroke-dasharray="1 1"/>`)}</button>
            <button aria-label="Vetor">${icon(svg`<path d="M1 13C4 6 11 3 15 14M5 9 14 2M4 9 7 7" stroke="#444"/><path d="M0 12H2.500V14.500H0ZM13 1H15.500V3.500H13ZM14 12.500H16V15H14Z" fill="#222"/><circle cx="8" cy="6.500" r="1.300" fill="#2f8fb0"/>`)}</button>
          </div>
          <div class="sub first">Direção</div>
          <label class="tick deep"><input type="radio" name="dir" checked />Normal (Para frente)</label>
          <label class="tick deep"><input type="radio" name="dir" />Corretivo (Para trás)</label>
          <label class="sub" for="interp">Interpolação:</label>
          ${combo("interp", "Cúbica", null, "cut")}
          <label class="sub" for="clip">Cortar:</label>
          ${combo("clip", "Ajustar", null, "cut")}
          <label class="tick tall"><span class="checkbox"><input type="checkbox" checked />
            <svg width="13" height="13" fill="none" aria-hidden="true"><path d="M2.500 6 6 10 13 1" stroke="#222" stroke-width="2.200"/></svg></span>Exibir imagem de visualização</label>
          <div class="cutbox">${scaleField("op", "Opacidade da imagem", "100,0", 100)}</div>
          <label class="sub" for="guides">Guias</label>
          ${combo("guides", "Número de linhas da grade", null, "cut")}
          <div class="cutbox below">${scaleField("lines", "Linhas", "15", 12, true)}</div>
          <label class="tick tall"><span class="checkbox"><input type="checkbox" /></span>Manter proporção (Ctrl)</label>
        </div>
        <div class="optscroll"><div class="pill"></div></div>
        <div class="strip opts">${optionButtons.map((b) => html`<button aria-label=${b.name}>${icon(b.glyph)}</button>`)}</div>
      </div>`;
  }

  private document() {
    return html`
      <div class="doctabs">
        <div class="doctab">
          <div class="docthumb"></div>
          <button aria-label="Fechar imagem">${icon(svg`<rect x=".5" y=".5" width="11" height="11" rx="2" fill="#e2e2e2" stroke="#666"/><path d="M3 3 9 9M9 3 3 9" stroke="#444" stroke-width="2"/>`, 12, 12)}</button>
        </div>
        <div class="rest"></div>
      </div>
      <div class="view">
        <div class="fixed">${menuArrow("Menu da imagem", true)}</div>
        ${this.hRuler()}
        <div class="fixed">${icon(svg`<path d="M.5.500H10.500V10.500H.5Z" fill="#f2f2f2" stroke="#333" stroke-dasharray="1 1"/><circle cx="5.500" cy="5" r="2.800" stroke="#555"/><path d="M7.500 7 10 9.500" stroke="#444" stroke-width="1.800"/>`, 11, 11)}</div>
        ${this.vRuler()}
        <div class="canvas">${this.drawing()}<resize-dialog></resize-dialog></div>
        <div class="vtrack"><div class="pill"></div></div>
        <div class="fixed">${icon(svg`<rect x="1" y="1" width="9" height="9" stroke="#555" stroke-dasharray="2 1.500"/>`, 11, 11)}</div>
        <div class="htrack"><div class="pill"></div></div>
        <div class="fixed">${icon(cross(7, 7, 7, "#204a87"), 14, 14)}</div>
      </div>
      <div class="status">
        <span>564,0, 42,0</span>
        ${combo("units", "px", "Unidade")}
        <input class="zoom" aria-label="Zoom" .value=${"100 %"} />
        <button class="pop" aria-label="Níveis de zoom">${arrows}</button>
        <span>Camada (3,7 MB)</span>
      </div>`;
  }

  private docks() {
    return html`
      <div class="tabs">
        <button class="tab on">${icon(cross(7, 7, 7, "#204a87"), 15, 14)}Navegação de imagens</button>
        <div class="rest">${menuArrow("Configurar navegação")}</div>
      </div>
      <div class="panel">
        <div class="frame"><div class="preview"></div></div>
        <div class="zoomrow"><input type="range" aria-label="Zoom" value="50" /><output>100%</output></div>
        <div class="strip views">
          ${viewButtons.map((b) => html`<button class=${classMap({ on: !!b.on })} aria-label=${b.name}>${icon(b.glyph)}</button>`)}
        </div>
      </div>
      <div class="griph"><i></i></div>
      <div class="tabs">
        <button class="tab on">${icon(svg`<path d="M.5 6.500 7 1V4C13 4 14 9 11 14 11 10 10 9 7 9V12Z" fill="#e4ea35" stroke="#8b9010" stroke-width=".9"/><path d="M8 1.500C15 4 17 9 12.500 14.500" stroke="#b7b93a" stroke-width="1.300"/>`)}Histórico do desfazer</button>
        <div class="rest">${menuArrow("Configurar histórico")}</div>
      </div>
      <div class="panel">
        <ul class="list undo">
          <li class="undoitem"><div class="undothumb"></div><span>[ Imagem base ]</span></li>
          <li class="undoitem on"><div class="undothumb"></div><span>Adicionar camada</span></li>
        </ul>
        <div class="strip undos">${undoButtons.map((b) => html`<button aria-label=${b.name}>${icon(b.glyph, 15)}</button>`)}</div>
      </div>
      <div class="griph"><i></i></div>
      <div class="tabs">
        <button class="tab on">${icon(svg`<g fill="#f2f2f2" stroke="#888" stroke-width=".9"><path d="M4 9H15L12 15H1Z"/><path d="M4 5.500H15L12 11.500H1Z"/><path d="M4 1.500H15.500L12.500 8H1Z"/></g>`)}Camadas</button>
        <button class="tab late"><span class="tinythumb"></span>Imagens</button>
        <div class="rest">${menuArrow("Configurar camadas")}</div>
      </div>
      <div class="panel grow">
        <div class="moderow"><label for="blend">Modo:</label>${combo("blend", "Normal", null)}</div>
        ${scaleField("layerop", "Opacidade", "100,0", 100)}
        <div class="lockrow"><span>Travar:</span>
          <button aria-label="Travar pixels">${icon(brushGlyph)}</button>
          <button aria-label="Travar canal alfa">${checker("lockAlpha", 16, 16, 4)}</button>
        </div>
        <ul class="list layers">
          <li class="layer on"><button aria-label="Visível">${icon(eyeGlyph, 13)}</button><button aria-label="Vincular"></button><i></i>
            <div class="lthumb active">${checker("layerThumb", 32, 20, 4)}</div><span>Camada</span></li>
          <li class="layer"><button aria-label="Visível">${icon(eyeGlyph, 13)}</button><button aria-label="Vincular"></button><i></i>
            <div class="lthumb"></div><b>Fundo</b></li>
        </ul>
        <div class="strip">${layerButtons.map((b) => html`<button aria-label=${b.name}>${icon(b.glyph)}</button>`)}</div>
      </div>`;
  }

  render() {
    return html`
      <header class="titlebar">
        <button aria-label="Recolher"><svg width="8" height="5"><path d="M0 0H8L4 5Z" fill="#666"/></svg></button>
        <h1>*[Sem título]-1.0 (cor RGB, 2 camadas) 640x400 – GIMP</h1>
        <button aria-label="Minimizar"><svg width="8" height="8"><path d="M0 4H8" stroke="#777" stroke-width="2"/></svg></button>
        <button aria-label="Maximizar"><svg width="8" height="8"><path d="M4 0V8M0 4H8" stroke="#777" stroke-width="2"/></svg></button>
        <button aria-label="Fechar"><svg width="8" height="8"><path d="M.7.700 7.300 7.300M7.300.700.7 7.300" stroke="#777" stroke-width="2"/></svg></button>
      </header>
      <nav class="menubar">${menus.map((m) => html`<button>${m}</button>`)}</nav>
      <div class="work">
        <aside class="left">${this.toolbox()}${this.options()}</aside>
        <div class="gutter"><div class="gripv"></div></div>
        <main class="center">${this.document()}</main>
        <div class="gutter"><div class="gripv"></div></div>
        <aside class="right">${this.docks()}</aside>
      </div>`;
  }
}
